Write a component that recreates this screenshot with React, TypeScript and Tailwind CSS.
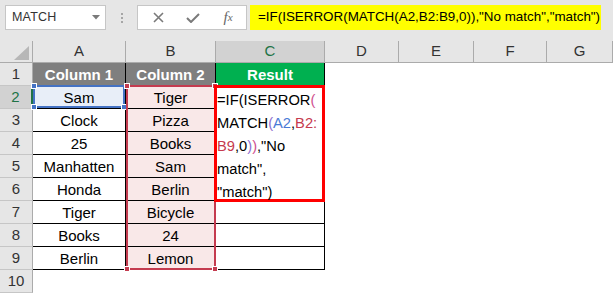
import React from 'react';

const letters = ['A', 'B', 'C', 'D', 'E', 'F', 'G'];
const widths = ['w-[93px]', 'w-[90px]', 'w-[109px]', 'w-[74px]', 'w-[75px]', 'w-[73px]', 'flex-1'];
const colA = ['Sam', 'Clock', '25', 'Manhatten', 'Honda', 'Tiger', 'Books', 'Berlin'];
const colB = ['Tiger', 'Pizza', 'Books', 'Sam', 'Berlin', 'Bicycle', '24', 'Lemon'];

function Handle({ pos, color }: { pos: string; color: string }) {
  return <span className={`absolute w-[6px] h-[6px] border border-white ${color} ${pos}`} />;
}

function Toolbar() {
  return (
    <div className="h-[41px] bg-[#e6e6e6] flex items-start pt-[5px] pl-[5px]">
      {/* name box */}
      <div className="w-[101px] h-[25px] bg-white border border-[#c6c6c6] flex items-center justify-between pl-[6px] pr-[5px]">
        <span className="text-[12.5px] text-[#333] tracking-[0.2px]">MATCH</span>
        <svg width="8" height="5" viewBox="0 0 8 5">
          <path d="M0 0h8L4 4.5z" fill="#7a7a7a" />
        </svg>
      </div>
      <div className="w-[31px] h-[25px] flex flex-col items-center justify-center gap-[2px]">
        <span className="w-[2px] h-[2px] bg-[#a6a6a6]" />
        <span className="w-[2px] h-[2px] bg-[#a6a6a6]" />
        <span className="w-[2px] h-[2px] bg-[#a6a6a6]" />
      </div>
      {/* cancel / enter / fx */}
      <div className="w-[110px] h-[25px] bg-white border border-[#c6c6c6] flex items-center">
        <div className="w-[38px] flex justify-center pl-[2px]">
          <svg width="11" height="11" viewBox="0 0 11 11">
            <path d="M1 1l9 9M10 1l-9 9" stroke="#7a7a7a" strokeWidth="1.6" />
          </svg>
        </div>
        <div className="w-[34px] flex justify-center">
          <svg width="14" height="10" viewBox="0 0 14 10">
            <path d="M1 5l4 4 8-8" stroke="#7a7a7a" strokeWidth="2" fill="none" />
          </svg>
        </div>
        <div className="w-[36px] flex justify-center font-['Liberation_Serif',serif] italic text-[#666] text-[15px] leading-none">
          f<span className="text-[11px] translate-y-[2px]">x</span>
        </div>
      </div>
      <div className="ml-[3px] w-[351px] h-[25px] bg-[#ffff00] flex items-center pl-[8px] text-[13.4px] text-black whitespace-nowrap">
        =IF(ISERROR(MATCH(A2,B2:B9,0)),"No match","match")
      </div>
    </div>
  );
}

function HeaderRow() {
  return (
    <div className="flex h-[22px]">
      <div className="w-[33px] bg-[#e6e6e6] border-r border-b border-[#ababab] flex items-end justify-end pr-[3px] pb-[2px]">
        <svg width="15" height="14" viewBox="0 0 15 14">
          <path d="M15 0v14H0z" fill="#b7b7b7" />
        </svg>
      </div>
      {letters.map((l, i) => (
        <div
          key={l}
          className={`${widths[i]} border-r border-b border-[#ababab] flex items-center justify-center text-[15px] ${
            l === 'C' ? 'bg-[#d2d2d2] text-[#217346]' : 'bg-[#e6e6e6] text-[#333]'
          }`}
        >
          {l}
        </div>
      ))}
    </div>
  );
}

function FormulaOverlay() {
  const purple = 'text-[#8f6fcf]';
  const pink = 'text-[#d0508f]';
  const blue = 'text-[#4a7bd6]';
  const red = 'text-[#c63a4e]';
  return (
    <div className="absolute -top-[1px] -left-[2px] w-[111px] h-[117px] border-[3px] border-[#ff0000] bg-white z-20 pt-[1px] text-[14.7px] leading-[23px] text-black">
      <div>
        =IF(ISERROR<span className={pink}>(</span>
      </div>
      <div>
        MATCH<span className={purple}>(</span>
        <span className={blue}>A2</span>,<span className={red}>B2:</span>
      </div>
      <div>
        <span className={red}>B9</span>,0<span className={purple}>)</span>
        <span className={pink}>)</span>,"No
      </div>
      <div>match",</div>
      <div>"match")</div>
    </div>
  );
}

function DataRow({ r }: { r: number }) {
  const active = r === 2;
  const inTable = r <= 9;
  return (
    <div className="flex h-[23px]">
      <div
        className={`w-[33px] border-b border-[#c6c6c6] flex items-center justify-center text-[15px] ${
          active
            ? 'bg-[#d2d2d2] text-[#217346] border-r-2 border-r-[#217346]'
            : 'bg-[#e6e6e6] text-[#333] border-r border-r-[#ababab]'
        }`}
      >
        {r}
      </div>
      {letters.map((l, i) => {
        let cls = '';
        let content: React.ReactNode = null;
        let overlay: React.ReactNode = null;
        if (inTable && i < 3) {
          cls = 'border-r border-b border-black';
          if (r === 1) {
            cls += ' text-white font-bold text-[14.5px]';
            cls += i === 2 ? ' bg-[#00b050]' : ' bg-[#7f7f7f]';
            content = ['Column 1', 'Column 2', 'Result'][i];
          } else if (i === 0) {
            content = colA[r - 2];
            if (active) {
              cls += ' bg-[#e8eef8]';
              overlay = (
                <div className="absolute -top-[1px] left-0 right-0 bottom-0 border-2 border-[#4472c4] z-10">
                  <Handle pos="-top-[4px] -left-[4px]" color="bg-[#4472c4]" />
                  <Handle pos="-bottom-[4px] -left-[4px]" color="bg-[#4472c4]" />
                  <Handle pos="-bottom-[4px] -right-[4px]" color="bg-[#4472c4]" />
                </div>
              );
            }
          } else if (i === 1) {
            cls += ' bg-[#f9e8e8]';
            content = colB[r - 2];
            if (active) {
              overlay = (
                <div className="absolute -top-[1px] left-0 w-[90px] h-[185px] border-2 border-[#c43b4f] z-10">
                  <Handle pos="-top-[4px] -left-[4px]" color="bg-[#c43b4f]" />
                  <Handle pos="-top-[4px] -right-[4px]" color="bg-[#c43b4f]" />
                  <Handle pos="-bottom-[4px] -left-[4px]" color="bg-[#c43b4f]" />
                  <Handle pos="-bottom-[4px] -right-[4px]" color="bg-[#c43b4f]" />
                </div>
              );
            }
          } else if (active) {
            overlay = <FormulaOverlay />;
          }
        }
        return (
          <div
            key={l}
            className={`${widths[i]} relative flex items-center justify-center pt-[2px] text-[15px] ${cls || 'bg-white'}`}
          >
            {content}
            {overlay}
          </div>
        );
      })}
    </div>
  );
}

export default function App() {
  return (
    <div className="w-[613px] h-[294px] overflow-hidden bg-white font-['Liberation_Sans',Arial,sans-serif] text-black">
      <Toolbar />
      <HeaderRow />
      {[1, 2, 3, 4, 5, 6, 7, 8, 9, 10].map((r) => (
        <DataRow key={r} r={r} />
      ))}
    </div>
  );
}
